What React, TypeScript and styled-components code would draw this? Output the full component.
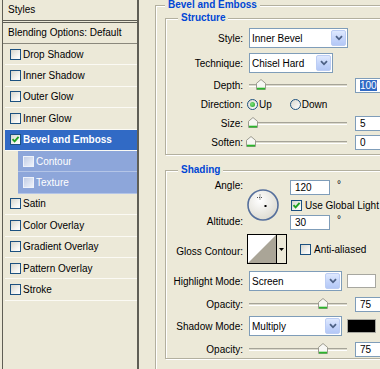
import React from "react";
import styled, { createGlobalStyle } from "styled-components";

const Beige = "#ECE9D8";
const PanelLine = "#5f5e55";
const FieldBorder = "#7F9DB9";
const TitleBlue = "#0046D5";

const GlobalStyle = createGlobalStyle`
  html, body {
    margin: 0;
    padding: 0;
    background: ${Beige};
  }
  body {
    font-family: "Liberation Sans", Arial, sans-serif;
    font-size: 10px;
    color: #000;
  }
`;

const Window = styled.div`
  display: flex;
  width: 380px;
  height: 369px;
  overflow: hidden;
  background: ${Beige};
`;

/* ---------- left: styles list ---------- */

const StylesPanel = styled.div`
  flex: 0 0 134px;
  margin-left: 2px;
  border-left: 1px solid ${PanelLine};
  border-right: 2px solid ${PanelLine};
`;

const PanelHeader = styled.div`
  height: 20px;
  line-height: 20px;
  padding-left: 5px;
  border-bottom: 3px double ${PanelLine};
`;

const BlendRow = styled.div`
  height: 20px;
  line-height: 20px;
  padding-left: 5px;
  border-bottom: 1px solid #8a887c;
`;

const EffectRow = styled.div<{ $active?: boolean; $sub?: boolean }>`
  display: flex;
  align-items: center;
  gap: 2px;
  height: 20.4px;
  margin-left: ${(p) => (p.$sub ? 15 : 2)}px;
  padding-left: 5px;
  border-bottom: 1px solid
    ${(p) => (p.$sub ? "rgba(255,255,255,0.35)" : "#fbfaf4")};
  background: ${(p) =>
    p.$active ? "#316AC5" : p.$sub ? "#8DA6DA" : "transparent"};
  color: ${(p) => (p.$active || p.$sub ? "#fff" : "#000")};
  font-weight: ${(p) => (p.$active ? 700 : 400)};
  white-space: nowrap;
`;

const CheckBox = styled.span<{ $light?: boolean }>`
  display: flex;
  align-items: center;
  justify-content: center;
  flex-shrink: 0;
  box-sizing: border-box;
  width: 11px;
  height: 11px;
  border: 1px solid ${(p) => (p.$light ? "#eef2fb" : "#1C5180")};
  background: ${(p) =>
    p.$light
      ? "linear-gradient(135deg, #c3cee6, #eef2fa)"
      : "linear-gradient(135deg, #d6d5cc, #f7f7f4 70%, #fff)"};
`;

const Checkbox = ({ checked, light }: { checked?: boolean; light?: boolean }) => (
  <CheckBox $light={light}>
    {checked && (
      <svg width="9" height="9" viewBox="0 0 9 9">
        <path
          d="M1.5 4.2 L3.6 6.4 L7.6 1.8"
          fill="none"
          stroke="#21A121"
          strokeWidth="1.9"
        />
      </svg>
    )}
  </CheckBox>
);

type Effect = { name: string; active?: boolean; checked?: boolean; sub?: boolean };

const effects: Effect[] = [
  { name: "Drop Shadow" },
  { name: "Inner Shadow" },
  { name: "Outer Glow" },
  { name: "Inner Glow" },
  { name: "Bevel and Emboss", active: true, checked: true },
  { name: "Contour", sub: true },
  { name: "Texture", sub: true },
  { name: "Satin" },
  { name: "Color Overlay" },
  { name: "Gradient Overlay" },
  { name: "Pattern Overlay" },
  { name: "Stroke" },
];

/* ---------- right: options ---------- */

const OptionsArea = styled.div`
  flex: 0 0 260px;
  padding-left: 16px;
`;

const GroupBox = styled.fieldset<{ $pad?: number; $top?: number; $bottom?: number }>`
  margin: ${(p) => p.$top ?? 0}px 0 0 0;
  min-width: 0;
  padding: ${(p) => p.$pad ?? 0}px 0 ${(p) => p.$bottom ?? 0}px
    ${(p) => (p.$pad !== undefined ? 9 : 0)}px;
  border: 1px solid #b3b09f;
  box-shadow: inset 1px 1px 0 #fff, 1px 1px 0 #fff;
`;

const GroupTitle = styled.legend<{ $offset: number }>`
  margin-left: ${(p) => p.$offset}px;
  padding: 0 3px;
  line-height: 10px;
  font-weight: 700;
  color: ${TitleBlue};
  background: ${Beige};
`;

const Inner = styled.div<{ $top: number; $bottom: number }>`
  display: flex;
  flex-direction: column;
  padding: ${(p) => p.$top}px 0 ${(p) => p.$bottom}px 0;
`;

const FieldRow = styled.div<{ $h: number; $gap?: number }>`
  display: grid;
  grid-template-columns: 77px 1fr;
  column-gap: 6px;
  align-items: center;
  height: ${(p) => p.$h}px;
  margin-top: ${(p) => p.$gap ?? 0}px;
`;

const FieldLabel = styled.span<{ $dy?: number }>`
  text-align: right;
  white-space: nowrap;
  padding-top: ${(p) => p.$dy ?? 0}px;
`;

const Controls = styled.div<{ $gap?: number }>`
  display: flex;
  align-items: center;
  gap: ${(p) => p.$gap ?? 0}px;
  height: 100%;
  white-space: nowrap;
`;

const SelectBox = styled.div<{ $w: number }>`
  display: flex;
  align-items: center;
  flex-shrink: 0;
  box-sizing: border-box;
  width: ${(p) => p.$w}px;
  height: 20px;
  padding: 1px 1px 1px 2px;
  border: 1px solid ${FieldBorder};
  background: #fff;
`;

const SelectText = styled.span`
  flex: 1;
`;

const DropButton = styled.span`
  display: flex;
  align-items: center;
  justify-content: center;
  box-sizing: border-box;
  width: 15px;
  height: 100%;
  border: 1px solid #bccdf4;
  border-radius: 2px;
  background: linear-gradient(180deg, #dfe9fe 0%, #c2d3fa 60%, #b4c8f6 100%);
`;

const Select = ({ value, width }: { value: string; width: number }) => (
  <SelectBox $w={width}>
    <SelectText>{value}</SelectText>
    <DropButton>
      <svg width="8" height="6" viewBox="0 0 8 6">
        <path d="M1 1.2 L4 4.3 L7 1.2" fill="none" stroke="#4d6185" strokeWidth="1.8" />
      </svg>
    </DropButton>
  </SelectBox>
);

const TextField = styled.div<{ $w: number; $ml?: number }>`
  display: flex;
  align-items: center;
  flex-shrink: 0;
  box-sizing: border-box;
  width: ${(p) => p.$w}px;
  height: 15px;
  margin-left: ${(p) => p.$ml ?? 0}px;
  padding-left: 4px;
  border: 1px solid ${FieldBorder};
  background: #fff;
  line-height: 11px;
`;

const Selected = styled.span`
  background: #316AC5;
  color: #fff;
`;

const SliderTrack = styled.div`
  position: relative;
  flex-shrink: 0;
  width: 104px;
  height: 16px;
  margin-left: -3px;

  &::before {
    content: "";
    position: absolute;
    left: 3px;
    right: 3px;
    top: 7px;
    height: 1px;
    border-top: 1px solid #a6a498;
    border-bottom: 1px solid #fff;
    background: #dcdacd;
  }
`;

const ThumbIcon = styled.svg`
  position: absolute;
  top: 2px;
`;

const Slider = ({ frac }: { frac: number }) => (
  <SliderTrack>
    <ThumbIcon width="10" height="11" viewBox="0 0 10 11" style={{ left: frac * 96 }}>
      <path d="M5 0.5 L9.5 4.3 V10.5 H0.5 V4.3 Z" fill="#f7f7f3" stroke="#9c9b8f" />
      <path d="M1 9.6 H9" stroke="#2bb52b" strokeWidth="1.8" />
    </ThumbIcon>
  </SliderTrack>
);

const RadioDot = styled.span<{ $on?: boolean; $ml?: number }>`
  display: flex;
  align-items: center;
  justify-content: center;
  flex-shrink: 0;
  box-sizing: border-box;
  width: 11px;
  height: 11px;
  margin-left: ${(p) => p.$ml ?? 0}px;
  border: 1px solid #1C5180;
  border-radius: 50%;
  background: linear-gradient(135deg, #d9d8cf, #fff);

  &::after {
    content: "";
    display: ${(p) => (p.$on ? "block" : "none")};
    width: 5px;
    height: 5px;
    border-radius: 50%;
    background: radial-gradient(circle at 40% 40%, #7ee27e, #21A121);
  }
`;

const Degree = styled.span`
  align-self: flex-start;
  margin-left: 4px;
  line-height: 9px;
`;

const AngleBlock = styled.div`
  display: grid;
  grid-template-columns: 77px 32px auto;
  justify-content: start;
  column-gap: 6px;
  height: 50px;
`;

const LabelStack = styled.div`
  display: flex;
  flex-direction: column;
  justify-content: space-between;
  padding-bottom: 2px;
  text-align: right;
  line-height: 12px;
`;

const Dial = styled.svg`
  align-self: center;
  margin-left: -2px;
`;

const AngleInputs = styled.div`
  display: flex;
  flex-direction: column;
  justify-content: space-between;
  margin-left: 3px;
`;

const InlineRow = styled.div<{ $ml?: number }>`
  display: flex;
  align-items: center;
  gap: 3px;
  margin-left: ${(p) => p.$ml ?? 0}px;
  white-space: nowrap;
`;

const ContourPicker = styled.div`
  display: flex;
  flex-shrink: 0;
  height: 30px;
  margin-left: -2px;
  margin-right: 13px;
`;

const ContourPreview = styled.div`
  box-sizing: border-box;
  width: 30px;
  height: 30px;
  border: 1px solid #000;
  background: #fff;
`;

const ContourArrow = styled.div`
  display: flex;
  align-items: center;
  justify-content: center;
  box-sizing: border-box;
  width: 10px;
  height: 30px;
  border: 1px solid #000;
  border-left: none;
`;

const Swatch = styled.span<{ $color: string }>`
  flex-shrink: 0;
  box-sizing: border-box;
  width: 29px;
  height: 14px;
  margin-left: 5px;
  border: 1px solid #a7a7a0;
  background: ${(p) => p.$color};
`;

const App = () => (
  <Window>
    <GlobalStyle />
    <StylesPanel>
      <PanelHeader>Styles</PanelHeader>
      <BlendRow>Blending Options: Default</BlendRow>
      {effects.map((e) => (
        <EffectRow key={e.name} $active={e.active} $sub={e.sub}>
          <Checkbox checked={e.checked} light={e.sub} />
          <span>{e.name}</span>
        </EffectRow>
      ))}
    </StylesPanel>

    <OptionsArea>
      <GroupBox $pad={3} $bottom={20}>
        <GroupTitle $offset={0}>Bevel and Emboss</GroupTitle>

        <GroupBox>
          <GroupTitle $offset={12}>Structure</GroupTitle>
          <Inner $top={5} $bottom={5}>
            <FieldRow $h={20}>
              <FieldLabel>Style:</FieldLabel>
              <Controls>
                <Select value="Inner Bevel" width={99} />
              </Controls>
            </FieldRow>
            <FieldRow $h={20} $gap={5}>
              <FieldLabel>Technique:</FieldLabel>
              <Controls>
                <Select value="Chisel Hard" width={84} />
              </Controls>
            </FieldRow>
            <FieldRow $h={16} $gap={4}>
              <FieldLabel>Depth:</FieldLabel>
              <Controls>
                <Slider frac={0.1} />
                <TextField $w={36} $ml={5}>
                  <Selected>100</Selected>
                </TextField>
              </Controls>
            </FieldRow>
            <FieldRow $h={16} $gap={3}>
              <FieldLabel>Direction:</FieldLabel>
              <Controls $gap={1}>
                <RadioDot $on $ml={-2} />
                <span>Up</span>
                <RadioDot $ml={17} />
                <span>Down</span>
              </Controls>
            </FieldRow>
            <FieldRow $h={16} $gap={3}>
              <FieldLabel>Size:</FieldLabel>
              <Controls>
                <Slider frac={0.02} />
                <TextField $w={36} $ml={5}>5</TextField>
              </Controls>
            </FieldRow>
            <FieldRow $h={15} $gap={3}>
              <FieldLabel>Soften:</FieldLabel>
              <Controls>
                <Slider frac={0} />
                <TextField $w={36} $ml={5}>0</TextField>
              </Controls>
            </FieldRow>
          </Inner>
        </GroupBox>

        <GroupBox $top={10}>
          <GroupTitle $offset={12}>Shading</GroupTitle>
          <Inner $top={5} $bottom={2}>
            <AngleBlock>
              <LabelStack>
                <span>Angle:</span>
                <span>Altitude:</span>
              </LabelStack>
              <Dial width="32" height="32" viewBox="0 0 32 32">
                <defs>
                  <radialGradient id="dialFill" cx="40%" cy="35%" r="75%">
                    <stop offset="0" stopColor="#ffffff" />
                    <stop offset="1" stopColor="#d9d7cc" />
                  </radialGradient>
                </defs>
                <circle cx="16" cy="16" r="15" fill="url(#dialFill)" stroke="#556f9c" strokeWidth="1.6" />
                <path d="M13 5.5v6M10 8.5h6" stroke="#555" strokeWidth="1" strokeDasharray="1 1" />
                <rect x="17.5" y="16" width="2" height="2" fill="#000" />
              </Dial>
              <AngleInputs>
                <InlineRow>
                  <TextField $w={40}>120</TextField>
                  <Degree>°</Degree>
                </InlineRow>
                <InlineRow $ml={1}>
                  <Checkbox checked />
                  <span>Use Global Light</span>
                </InlineRow>
                <InlineRow>
                  <TextField $w={40}>30</TextField>
                  <Degree>°</Degree>
                </InlineRow>
              </AngleInputs>
            </AngleBlock>

            <FieldRow $h={30} $gap={4}>
              <FieldLabel $dy={5}>Gloss Contour:</FieldLabel>
              <Controls>
                <ContourPicker>
                  <ContourPreview>
                    <svg width="28" height="28" viewBox="0 0 28 28">
                      <polygon points="0,28 28,0 28,28" fill="#aaa597" />
                    </svg>
                  </ContourPreview>
                  <ContourArrow>
                    <svg width="5" height="3" viewBox="0 0 5 3">
                      <polygon points="0,0 5,0 2.5,3" fill="#000" />
                    </svg>
                  </ContourArrow>
                </ContourPicker>
                <InlineRow>
                  <Checkbox />
                  <span>Anti-aliased</span>
                </InlineRow>
              </Controls>
            </FieldRow>

            <FieldRow $h={20} $gap={7}>
              <FieldLabel>Highlight Mode:</FieldLabel>
              <Controls>
                <Select value="Screen" width={93} />
                <Swatch $color="#ffffff" />
              </Controls>
            </FieldRow>
            <FieldRow $h={15} $gap={5}>
              <FieldLabel>Opacity:</FieldLabel>
              <Controls>
                <Slider frac={0.75} />
                <TextField $w={36} $ml={5}>75</TextField>
              </Controls>
            </FieldRow>
            <FieldRow $h={20} $gap={5}>
              <FieldLabel>Shadow Mode:</FieldLabel>
              <Controls>
                <Select value="Multiply" width={93} />
                <Swatch $color="#000000" />
              </Controls>
            </FieldRow>
            <FieldRow $h={15} $gap={5}>
              <FieldLabel>Opacity:</FieldLabel>
              <Controls>
                <Slider frac={0.75} />
                <TextField $w={36} $ml={5}>75</TextField>
              </Controls>
            </FieldRow>
          </Inner>
        </GroupBox>
      </GroupBox>
    </OptionsArea>
  </Window>
);

export default App;
